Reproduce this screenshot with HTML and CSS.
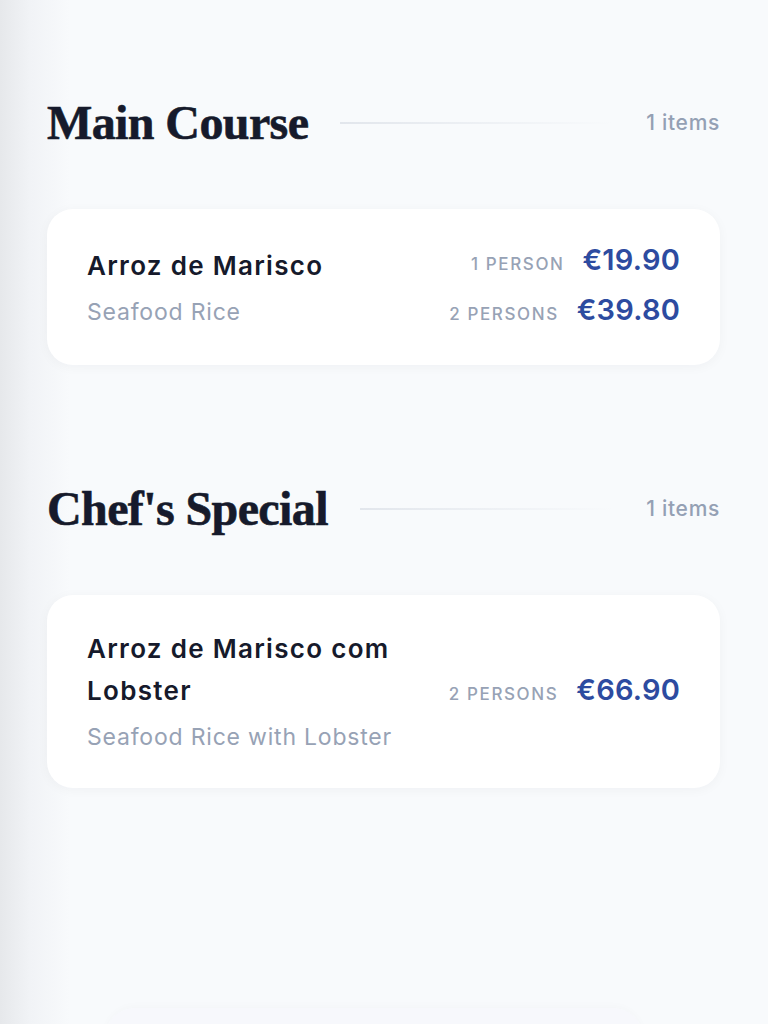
FILE: index.html
```html
<!DOCTYPE html>
<html lang="en">
<head>
    <meta charset="UTF-8">
    <meta name="viewport" content="width=device-width, initial-scale=1.0">
    <title>Menu</title>
    <link rel="stylesheet" href="styles.css">
</head>
<body>
    <main class="menu">
        <section class="menu-section">
            <div class="section-head">
                <h2>Main Course</h2>
                <span class="section-line"></span>
                <span class="section-count">1 items</span>
            </div>

            <div class="dish-card">
                <div class="dish-info">
                    <h3>Arroz de Marisco</h3>
                    <p>Seafood Rice</p>
                </div>
                <div class="dish-prices">
                    <div class="price-row">
                        <span class="price-label">1 Person</span>
                        <span class="price">€19.90</span>
                    </div>
                    <div class="price-row">
                        <span class="price-label">2 Persons</span>
                        <span class="price">€39.80</span>
                    </div>
                </div>
            </div>
        </section>

        <section class="menu-section">
            <div class="section-head">
                <h2>Chef's Special</h2>
                <span class="section-line"></span>
                <span class="section-count">1 items</span>
            </div>

            <div class="dish-card">
                <div class="dish-info">
                    <h3>Arroz de Marisco com Lobster</h3>
                    <p>Seafood Rice with Lobster</p>
                </div>
                <div class="dish-prices">
                    <div class="price-row">
                        <span class="price-label">2 Persons</span>
                        <span class="price">€66.90</span>
                    </div>
                </div>
            </div>
        </section>
    </main>

    <div class="bottom-bar"></div>
</body>
</html>
```

FILE: styles.css
```css
body {
    margin: 0;
    min-height: 100vh;
    font-family: 'Inter', 'Noto Sans', sans-serif;
    color: #161a2b;
    background: linear-gradient(to right, #e6e8eb 0, #f1f3f6 30px, #f8fafc 70px, #f8fafc 100%);
    overflow: hidden;
}

.menu {
    padding: 96px 48px 0 47px;
}

.menu-section {
    margin-bottom: 117px;
}

.section-head {
    display: flex;
    align-items: center;
    height: 53px;
    margin-bottom: 60px;
}

.section-head h2 {
    margin: 0;
    font-family: 'Liberation Serif', serif;
    font-weight: 700;
    font-size: 48px;
    letter-spacing: -0.6px;
    -webkit-text-stroke: 0.6px #161a2b;
    color: #161a2b;
    white-space: nowrap;
}

.section-line {
    flex: 1;
    height: 2px;
    margin: 0 32px;
    background: linear-gradient(to right, #e2e6ec, rgba(226, 230, 236, 0));
}

.section-count {
    font-size: 21px;
    font-weight: 500;
    letter-spacing: 0.7px;
    color: #94a0b4;
}

.dish-card {
    display: flex;
    align-items: center;
    justify-content: space-between;
    background: #fff;
    border-radius: 26px;
    padding: 33px 40px;
    box-shadow: 0 2px 12px rgba(15, 23, 42, 0.04);
}

.dish-info {
    max-width: 340px;
}

.dish-info h3 {
    margin: 0;
    font-size: 26px;
    font-weight: 600;
    letter-spacing: 1.3px;
    line-height: 42px;
    color: #161a2b;
}

.dish-info p {
    margin: 8px 0 0;
    font-size: 23px;
    letter-spacing: 0.8px;
    line-height: 35px;
    color: #97a2b5;
}

.dish-prices {
    display: flex;
    flex-direction: column;
    gap: 10px;
}

.price-row {
    display: flex;
    align-items: baseline;
    justify-content: flex-end;
    gap: 18px;
    height: 40px;
}

.price-label {
    font-size: 17px;
    font-weight: 500;
    letter-spacing: 1.6px;
    text-transform: uppercase;
    color: #97a2b5;
}

.price {
    font-size: 29px;
    font-weight: 600;
    letter-spacing: 0.2px;
    color: #2d4ba0;
}

.bottom-bar {
    position: fixed;
    left: 105px;
    right: 125px;
    bottom: -64px;
    height: 80px;
    border-radius: 30px;
    background: #f7f8fc;
    box-shadow: 0 -2px 8px rgba(15, 23, 42, 0.02);
}
```
